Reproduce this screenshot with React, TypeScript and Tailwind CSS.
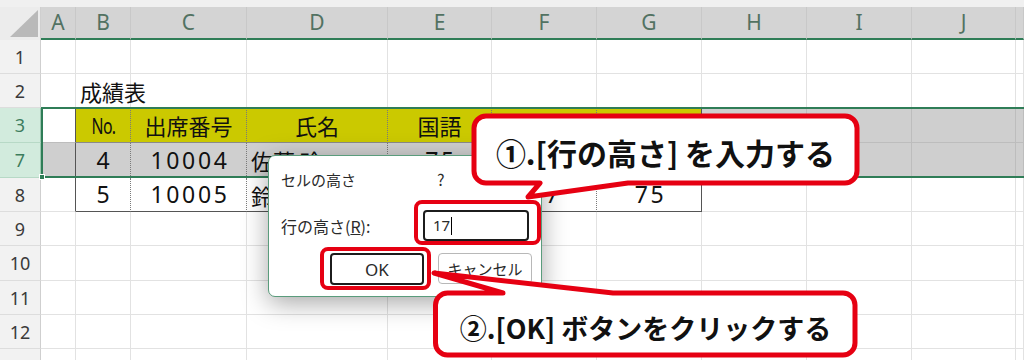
import React from 'react';

const WIDTHS = ['w-[35px]', 'w-[55px]', 'w-[116px]', 'w-[141px]', 'w-[104px]', 'w-[105px]', 'w-[105px]', 'w-[105px]', 'w-[105px]', 'w-[104px]', 'flex-1'];
const LETTERS = ['A', 'B', 'C', 'D', 'E', 'F', 'G', 'H', 'I', 'J', ''];

type C = { t: string; k: 'num' | 'jp' | 'left' | 'no' };
type Row = { n: string; h: string; cells: Record<number, C> };

const ROWS: Row[] = [
  { n: '1', h: 'h-[34px]', cells: {} },
  { n: '2', h: 'h-[34px]', cells: { 1: { t: '成績表', k: 'left' } } },
  {
    n: '3', h: 'h-[35px]', cells: {
      1: { t: 'No.', k: 'no' }, 2: { t: '出席番号', k: 'jp' }, 3: { t: '氏名', k: 'jp' },
      4: { t: '国語', k: 'jp' },
    },
  },
  {
    n: '7', h: 'h-[35px]', cells: {
      1: { t: '4', k: 'num' }, 2: { t: '10004', k: 'num' }, 3: { t: '佐藤 玲', k: 'left' },
      4: { t: '75', k: 'num' },
    },
  },
  {
    n: '8', h: 'h-[34px]', cells: {
      1: { t: '5', k: 'num' }, 2: { t: '10005', k: 'num' }, 3: { t: '鈴木 翔', k: 'left' },
      5: { t: '77', k: 'num' }, 6: { t: '75', k: 'num' },
    },
  },
  { n: '9', h: 'h-[34px]', cells: {} },
  { n: '10', h: 'h-[35px]', cells: {} },
  { n: '11', h: 'h-[34px]', cells: {} },
  { n: '12', h: 'h-[34px]', cells: {} },
  { n: '', h: 'h-[35px]', cells: {} },
];

function cellCls(r: string, c: number) {
  const sel = r === '3' || r === '7';
  const tbl = r === '3' || r === '7' || r === '8';
  let bg = 'bg-white';
  if (r === '3') bg = c === 0 ? 'bg-white' : c <= 6 ? 'bg-[#cbc900]' : 'bg-[#cfcfcf]';
  else if (r === '7') bg = 'bg-[#cfcfcf]';
  let br = sel ? 'border-r-[#bdbdbd]' : 'border-r-[#e2e2e2]';
  if (tbl && c === 0) br = 'border-r-[#555555]';
  else if (tbl && c >= 1 && c <= 5) br = 'border-r-[#7a7a7a] [border-right-style:dotted]';
  else if (tbl && c === 6) br = 'border-r-[#555555]';
  let bb = sel ? 'border-b-[#bdbdbd]' : 'border-b-[#e2e2e2]';
  if (r === '3' && c >= 1 && c <= 6) bb = 'border-b-[#8a8a8a]';
  if (r === '8' && c >= 1 && c <= 6) bb = 'border-b-[#555555]';
  return `${bg} ${br} ${bb}`;
}

function CellText({ c }: { c: C }) {
  if (c.k === 'num')
    return (
      <span className="relative z-10 w-full text-center pl-[3px] text-[23px] leading-none tracking-[2.6px] text-[#111] font-['Noto_Sans',sans-serif]">
        {c.t}
      </span>
    );
  if (c.k === 'no')
    return (
      <span className="relative z-10 w-full text-center text-[22px] leading-none text-[#111] font-['Noto_Sans',sans-serif]">
        <span className="inline-block scale-x-[0.72] tracking-[-1px]">{c.t}</span>
      </span>
    );
  if (c.k === 'jp')
    return (
      <span className="relative z-10 w-full text-center text-[22px] leading-none text-[#111] font-['Noto_Sans_CJK_JP',sans-serif]">
        {c.t}
      </span>
    );
  return (
    <span className="relative z-10 pl-[4px] whitespace-nowrap text-[22px] leading-none text-[#111] font-['Noto_Sans_CJK_JP',sans-serif]">
      {c.t}
    </span>
  );
}

export default function App() {
  return (
    <div className="relative w-[1024px] h-[360px] overflow-hidden bg-white font-['Noto_Sans','Noto_Sans_CJK_JP',sans-serif]">
      {/* sheet */}
      <div className="flex flex-col">
        <div className="h-[7px] bg-[#f0f0f0]" />
        {/* column header */}
        <div className="flex h-[33px]">
          <div className="relative w-[41px] shrink-0 bg-[#ececec] border-r border-[#cfcfcf]">
            <svg className="absolute left-0 top-0" width="41" height="33" viewBox="0 0 41 33">
              <polygon points="38,3 38,30 10,30" fill="#b9b9b9" />
            </svg>
          </div>
          {LETTERS.map((l, i) => (
            <div
              key={i}
              className={`${WIDTHS[i]} shrink-0 flex items-center justify-center bg-[#d4d4d4] border-r border-r-[#c8c8c8] border-b-2 border-b-[#2f7d57] text-[21px] text-[#527262] leading-none`}
            >
              {l}
            </div>
          ))}
        </div>
        {ROWS.map((r, ri) => {
          const sel = r.n === '3' || r.n === '7';
          return (
            <div key={ri} className={`flex ${r.h}`}>
              <div
                className={`w-[41px] shrink-0 flex items-center justify-center border-r border-b text-[18px] leading-none ${
                  sel
                    ? 'bg-[#d2ebdd] text-[#3d7d5d] border-r-[#9cc7b0] border-b-[#b7d9c6]'
                    : 'bg-[#f2f2f2] text-[#3a3a3a] border-r-[#cfcfcf] border-b-[#dddddd]'
                }`}
              >
                {r.n}
              </div>
              {WIDTHS.map((w, c) => {
                const cell = r.cells[c];
                return (
                  <div key={c} className={`${w} shrink-0 h-full flex items-center border-r border-b ${cellCls(r.n, c)}`}>
                    {cell ? <CellText c={cell} /> : null}
                  </div>
                );
              })}
            </div>
          );
        })}
      </div>

      {/* row selection outline */}
      <div className="absolute z-20 left-[41px] top-[107px] w-[990px] h-[71px] border-2 border-[#2f7d57]" />
      <div className="absolute z-20 left-[39px] top-[174px] w-[6px] h-[6px] bg-[#2f7d57] border border-white" />

      {/* dialog */}
      <div className="absolute z-30 left-[268px] top-[155px] w-[274px] h-[142px] bg-white border border-[#5a9c7c] rounded-[7px] shadow-[0_6px_26px_rgba(0,0,0,0.35)] font-['Noto_Sans_CJK_JP',sans-serif] text-[#2a2a2a]">
        <div className="pl-[12px] pt-[13px]">
          <div className="flex items-center h-[20px]">
            <span className="w-[156px] text-[15px] leading-none">セルの高さ</span>
            <span className="text-[16px] leading-none">?</span>
          </div>
          <div className="flex items-center h-[31px] mt-[21px]">
            <span className="w-[142px] text-[16px] leading-none">
              行の高さ(<span className="underline">R</span>):
            </span>
            <div className="w-[106px] h-[31px] border-2 border-[#1c1c1c] rounded-[4px] flex items-center pl-[8px]">
              <span className="text-[15px] leading-none font-['Noto_Sans',sans-serif]">17</span>
              <span className="w-px h-[18px] bg-black ml-px" />
            </div>
          </div>
          <div className="flex mt-[12px] ml-[49px] gap-[14px]">
            <div className="w-[94px] h-[32px] border-2 border-[#1c1c1c] rounded-[4px] flex items-center justify-center text-[17px] leading-none font-['Noto_Sans',sans-serif]">
              OK
            </div>
            <div className="w-[94px] h-[31px] border border-[#b8b8b8] rounded-[4px] flex items-center justify-center text-[15px] leading-none">
              キャンセル
            </div>
          </div>
        </div>
      </div>

      {/* red highlight boxes */}
      <div className="absolute z-40 left-[414px] top-[200px] w-[127px] h-[45px] border-[4px] border-[#e60012] rounded-[8px]" />
      <div className="absolute z-40 left-[320px] top-[247px] w-[111px] h-[43px] border-[4px] border-[#e60012] rounded-[8px]" />

      {/* callout shapes */}
      <svg className="absolute z-40 left-0 top-0 pointer-events-none" width="1024" height="360" viewBox="0 0 1024 360">
        <path
          d="M 486 116 H 845 A 12 12 0 0 1 857 128 V 171 A 12 12 0 0 1 845 183 H 628 L 528 197 L 540 183 H 486 A 12 12 0 0 1 474 171 V 128 A 12 12 0 0 1 486 116 Z"
          fill="#ffffff"
          stroke="#e60012"
          strokeWidth="5"
          strokeLinejoin="round"
        />
        <path
          d="M 447.5 293 H 503 L 434 273 L 613 293 H 843 A 12 12 0 0 1 855 305 V 343 A 12 12 0 0 1 843 355 H 447.5 A 12 12 0 0 1 435.5 343 V 305 A 12 12 0 0 1 447.5 293 Z"
          fill="#ffffff"
          stroke="#e60012"
          strokeWidth="5"
          strokeLinejoin="round"
        />
      </svg>

      {/* callout texts */}
      <div className="absolute z-50 left-[474px] top-[116px] w-[383px] h-[67px] flex items-center justify-center pt-[4px] font-['Noto_Sans_CJK_JP',sans-serif] font-bold text-[30px] leading-none text-[#111] whitespace-nowrap">
        ①.[行の高さ] を入力する
      </div>
      <div className="absolute z-50 left-[436px] top-[293px] w-[419px] h-[62px] flex items-center justify-center pt-[7px] font-['Noto_Sans_CJK_JP',sans-serif] font-bold text-[27px] leading-none text-[#111] whitespace-nowrap">
        ②.[OK] ボタンをクリックする
      </div>
    </div>
  );
}
